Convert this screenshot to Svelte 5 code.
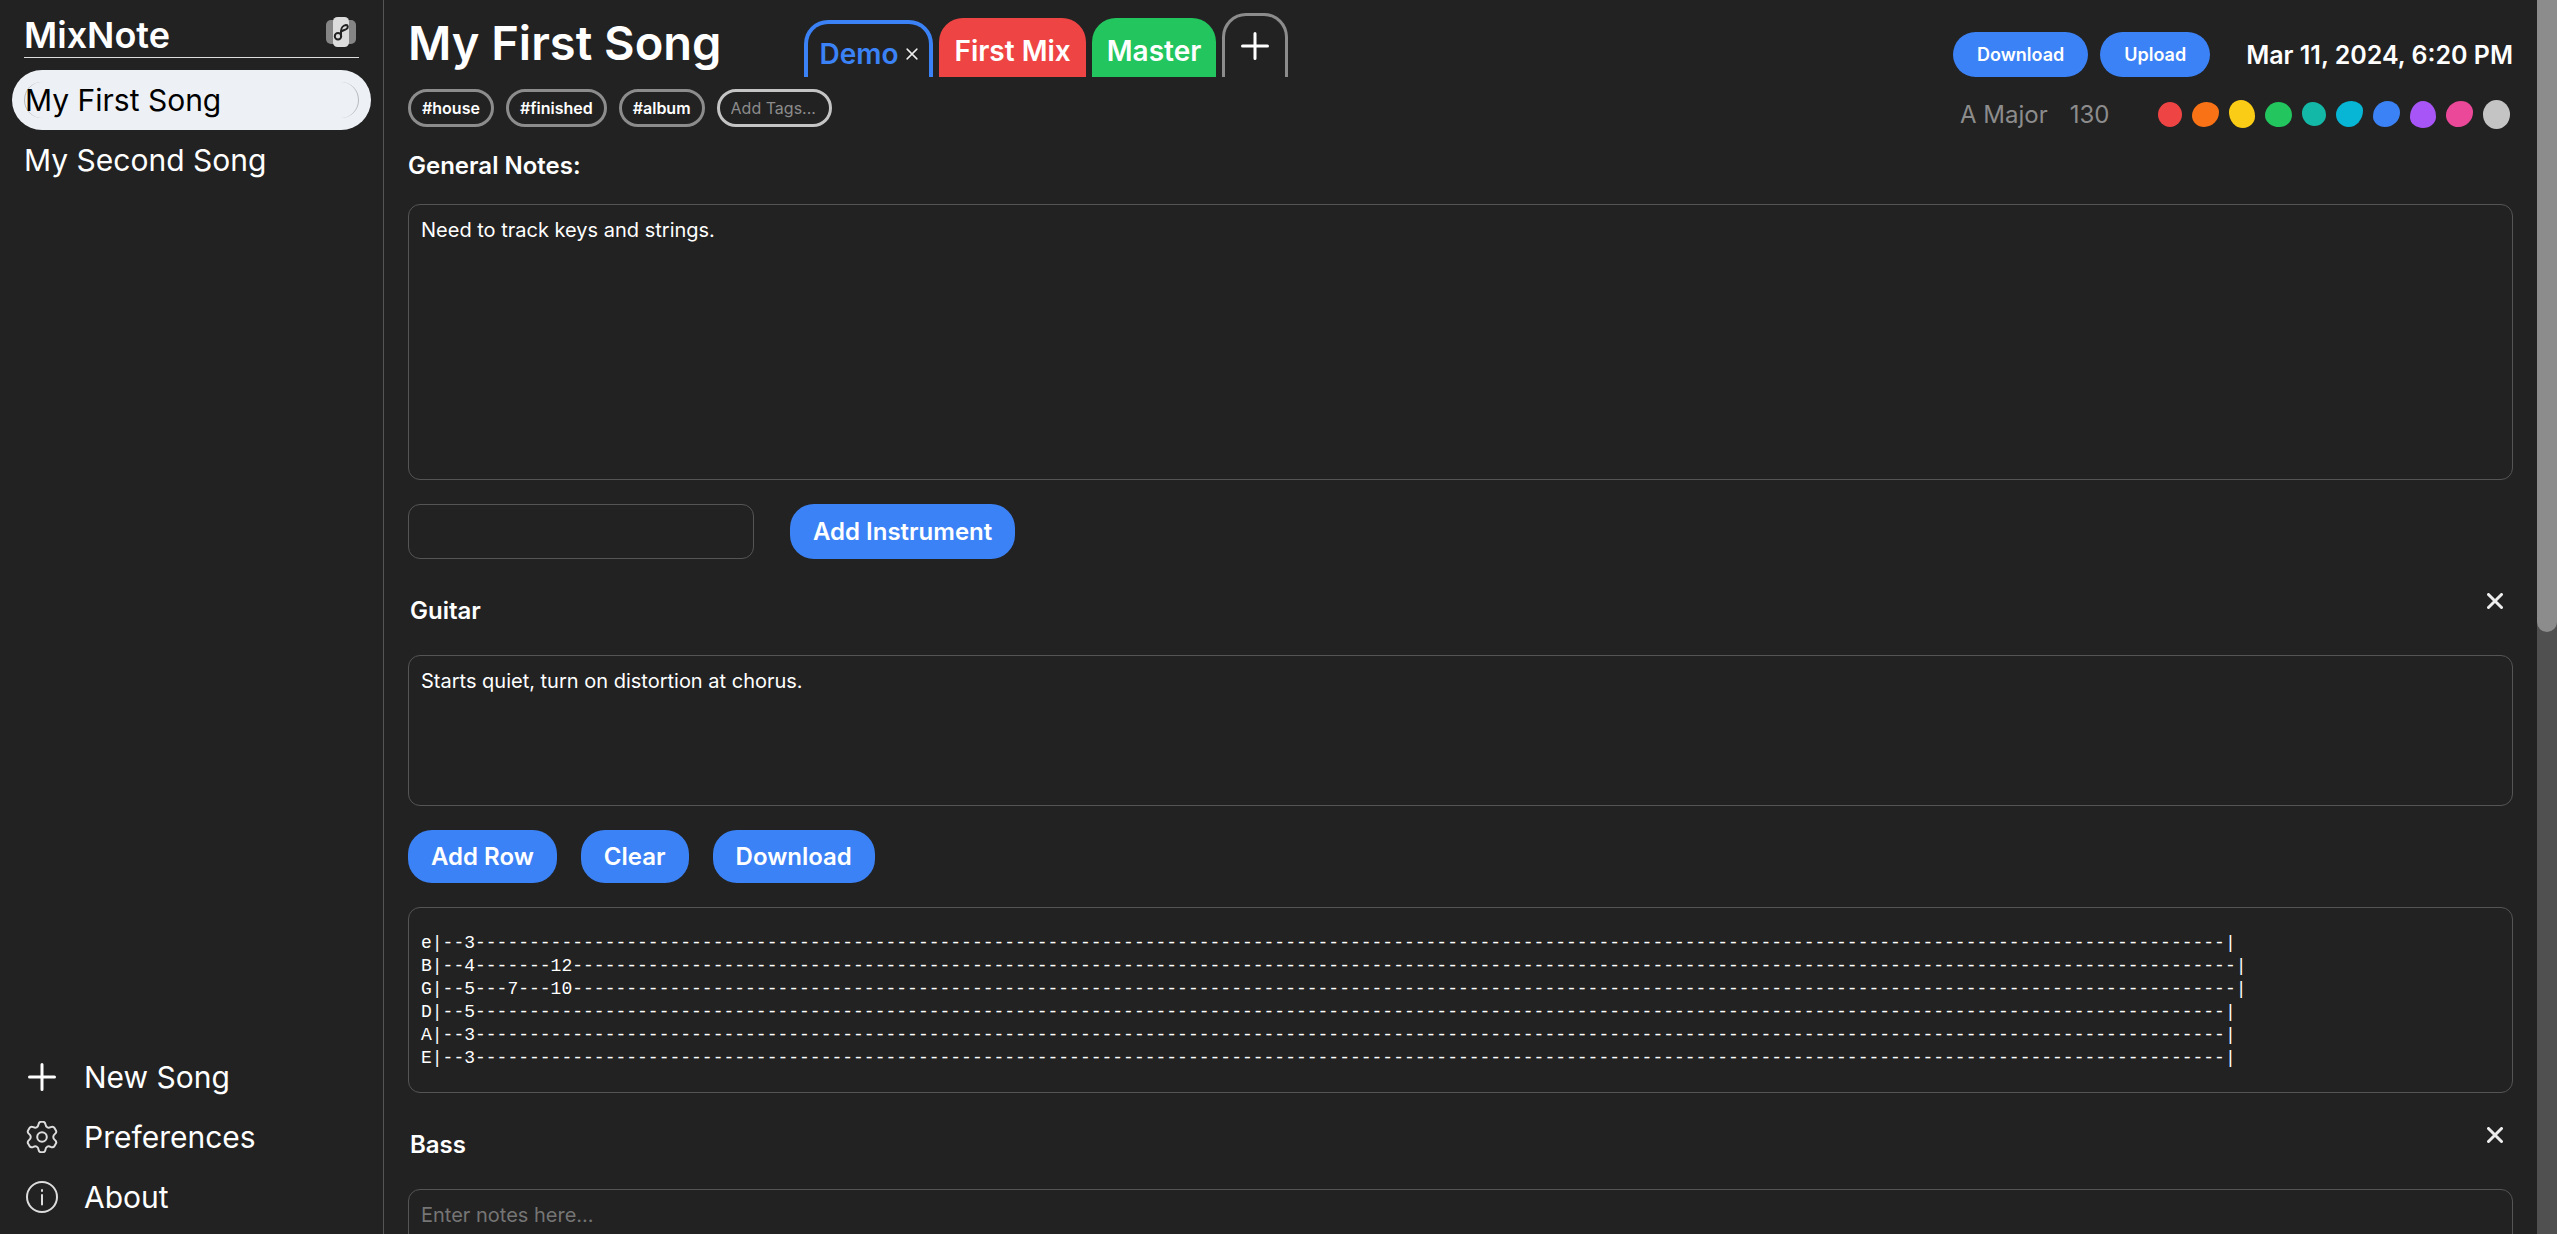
<script>
  const songs = [
    { name: 'My First Song', active: true },
    { name: 'My Second Song', active: false }
  ];
  const tags = ['#house', '#finished', '#album'];
  const colors = ['red', 'orange', 'yellow', 'green', 'teal', 'cyan', 'blue', 'purple', 'pink', 'grey'];
  const tab = [
    'e|--3' + '-'.repeat(162) + '|',
    'B|--4-------12' + '-'.repeat(154) + '|',
    'G|--5---7---10' + '-'.repeat(154) + '|',
    'D|--5' + '-'.repeat(162) + '|',
    'A|--3' + '-'.repeat(162) + '|',
    'E|--3' + '-'.repeat(162) + '|'
  ].join('\n');
</script>

{#snippet cross()}
  <svg class="cross" viewBox="0 0 16 16" aria-hidden="true"><path d="M1.5 1.5 14.5 14.5M14.5 1.5 1.5 14.5" /></svg>
{/snippet}

<div class="app">
  <aside class="sidebar">
    <header class="brand">
      <h1>MixNote</h1>
      <svg class="logo" viewBox="0 0 30 30" aria-hidden="true">
        <rect x="0" y="3" width="30" height="24" rx="5" fill="#858585" stroke="none" />
        <rect x="7" y="0" width="16" height="30" rx="4.5" fill="#dcdcdc" stroke="none" />
        <circle cx="12" cy="19.3" r="3.2" />
        <path d="M15 19V14C15 10.500 17.500 8.300 20 8C22.300 7.900 22.300 10.800 20.500 12C19 13 17 13.200 15.300 14.500" />
      </svg>
    </header>
    <nav class="songs" aria-label="Songs">
      {#each songs as song}
        <button class="song" class:active={song.active}><span>{song.name}</span></button>
      {/each}
    </nav>
    <nav class="menu" aria-label="Application">
      <button>
        <svg class="plus" viewBox="0 0 32 32" aria-hidden="true"><path d="M16 3.500V28.500M3.500 16H28.500" /></svg>
        New Song
      </button>
      <button>
        <svg viewBox="0 0 32 32" aria-hidden="true">
          <circle cx="16" cy="16" r="4.800" />
          <path d="M12.600 3.200Q13 .8 15 .8H17Q19 .8 19.400 3.200C19.900 6.500 22.400 7.300 24.600 6.100Q27.300 4.900 28.500 7L29.900 9.400Q31 11.500 28.900 13C26.700 14.600 26.700 17.400 28.900 19Q31 20.500 29.900 22.600L28.500 25Q27.300 27.100 24.600 25.900C22.400 24.700 19.900 25.500 19.400 28.800Q19 31.200 17 31.200H15Q13 31.200 12.600 28.800C12.100 25.500 9.600 24.700 7.400 25.900Q4.700 27.100 3.500 25L2.100 22.600Q1 20.500 3.100 19C5.300 17.400 5.300 14.600 3.100 13Q1 11.500 2.100 9.400L3.500 7Q4.700 4.900 7.400 6.100C9.600 7.300 12.100 6.500 12.600 3.200Z" />
        </svg>
        Preferences
      </button>
      <button>
        <svg viewBox="0 0 32 32" aria-hidden="true"><circle cx="16" cy="16" r="15" /><path d="M16 14V23.500M16 9V10" /></svg>
        About
      </button>
    </nav>
  </aside>

  <main>
    <header class="top">
      <div class="heading">
        <div class="title-row">
          <h2>My First Song</h2>
          <div class="tabs" role="tablist">
            <div class="tab demo"><button role="tab" aria-selected="true">Demo</button><button class="close" aria-label="Close Demo">{@render cross()}</button></div>
            <button class="tab first" role="tab" aria-selected="false">First Mix</button>
            <button class="tab master" role="tab" aria-selected="false">Master</button>
            <button class="tab add" aria-label="Add version"><svg class="plus" viewBox="0 0 28 28" aria-hidden="true"><path d="M14 1.500V26.500M1.500 14H26.500" /></svg></button>
          </div>
        </div>
        <div class="tags">
          {#each tags as tag}<button class="tag">{tag}</button>{/each}
          <input class="tag entry" placeholder="Add Tags..." aria-label="Add tags" />
        </div>
      </div>
      <div class="meta">
        <div class="actions">
          <button class="pill small">Download</button>
          <button class="pill small">Upload</button>
          <time datetime="2024-03-11T18:20">Mar 11, 2024, 6:20 PM</time>
        </div>
        <div class="details">
          <span>A Major</span>
          <span>130</span>
          <div class="colors">
            {#each colors as color}<button class="dot {color}" aria-label={color}></button>{/each}
          </div>
        </div>
      </div>
    </header>

    <label class="section" for="general">General Notes:</label>
    <textarea id="general" class="general" value="Need to track keys and strings."></textarea>

    <form class="instrument-form">
      <input class="field" aria-label="Instrument name" />
      <button type="button" class="pill">Add Instrument</button>
    </form>

    <section>
      <div class="instrument">
        <label for="guitar">Guitar</label>
        <button aria-label="Remove Guitar">{@render cross()}</button>
      </div>
      <textarea id="guitar" value="Starts quiet, turn on distortion at chorus."></textarea>
      <div class="row-actions">
        <button class="pill">Add Row</button>
        <button class="pill">Clear</button>
        <button class="pill">Download</button>
      </div>
      <pre>{tab}</pre>
    </section>

    <section>
      <div class="instrument">
        <label for="bass">Bass</label>
        <button aria-label="Remove Bass">{@render cross()}</button>
      </div>
      <textarea id="bass" placeholder="Enter notes here..."></textarea>
    </section>
  </main>
  <div class="scrollbar" aria-hidden="true"><div class="thumb"></div></div>
</div>

<style>
  :global(body) { background: #222; }
  * { box-sizing: border-box; }
  .app {
    display: flex;
    height: 100vh;
    overflow: hidden;
    background: #222;
    color: #fff;
    font-family: Inter, "Liberation Sans", sans-serif;
  }
  button, input, textarea { font: inherit; color: inherit; margin: 0; padding: 0; border: 0; background: none; }
  button { cursor: pointer; }
  h1, h2 { margin: 0; }
  svg { display: block; fill: none; stroke-linecap: round; stroke-linejoin: round; }

  .sidebar { display: flex; flex-direction: column; width: 384px; flex: none; padding: 12px 12px 7px; border-right: 1px solid #555; }
  .brand { display: flex; justify-content: space-between; align-items: center; height: 46px; margin: 0 12px 12px; border-bottom: 1px solid #ddd; }
  h1 { font-size: 36px; line-height: 46px; font-weight: 600; }
  .logo { width: 30px; height: 30px; margin: 0 3px 5px 0; stroke: #222; stroke-width: 2; }
  .songs { display: flex; flex-direction: column; flex: 1; }
  .song { padding: 12px; height: 60px; border-radius: 30px; text-align: left; font-size: 30px; line-height: 36px; }
  .song span { display: block; border-radius: 18px; }
  .song.active { background: #edf1f5; color: #000; }
  .song.active span { border: 0 solid #b4b8bb; border-width: 0 1px; }
  .menu { display: flex; flex-direction: column; }
  .menu button { display: flex; align-items: center; gap: 26px; height: 60px; padding: 0 14px; font-size: 30px; }
  .menu svg { width: 32px; height: 32px; stroke: #ddd; stroke-width: 2; }
  .menu .plus { stroke: #fff; stroke-width: 3; }

  main { flex: 1; min-width: 0; padding: 12px 24px 0; overflow: hidden; }
  .top { display: flex; justify-content: space-between; }
  .title-row { display: flex; height: 65px; gap: 83px; align-items: flex-end; }
  h2 { font-size: 47px; line-height: 62px; font-weight: 600; align-self: flex-start; }
  .tabs { display: flex; align-items: flex-end; gap: 6px; font-size: 28px; line-height: 36px; font-weight: 600; }
  .tab { border-radius: 24px 24px 0 0; }
  .demo { display: flex; align-items: center; height: 57px; padding: 6px 11px 0; gap: 8px; border: 4px solid #3b82f6; border-bottom: 0; color: #3b82f6; }
  .close { color: #fff; }
  .close .cross { width: 12px; height: 12px; }
  .first, .master { height: 59px; padding: 6px 15px 0; }
  .first { background: #ef4444; }
  .master { background: #22c55e; }
  .add { display: grid; place-items: center; width: 66px; height: 64px; padding-bottom: 2px; border: 3px solid #8c8c8c; border-bottom: 0; }
  .add svg { width: 28px; height: 28px; stroke: #fff; stroke-width: 3; }
  .tags { display: flex; gap: 12px; margin-top: 12px; }
  .tag { height: 38px; padding: 0 11px; border: 3px solid #8c8c8c; border-radius: 19px; font-size: 16px; font-weight: 600; }
  .entry { width: 115px; border-color: #c4c4c4; font-weight: 400; }
  .entry::placeholder { color: #8c8c8c; opacity: 1; }

  .meta { display: flex; flex-direction: column; }
  .actions { display: flex; align-items: center; gap: 12px; margin-top: 20px; }
  .pill { height: 53px; padding: 0 23px; border-radius: 24px; background: #3b82f6; font-size: 24px; font-weight: 600; white-space: nowrap; }
  .small { height: 45px; padding: 0 24px; font-size: 18px; }
  time { margin-left: 24px; font-size: 25px; font-weight: 600; }
  .details { display: flex; align-items: center; gap: 22px; height: 36px; margin: 19px 3px 0 7px; color: #8c8c8c; font-size: 24px; }
  .colors { display: flex; align-items: center; gap: 10px; margin-left: auto; }
  .dot { border-radius: 50%; }
  .red { width: 24px; height: 25px; background: #ef4444; }
  .orange { width: 27px; height: 25px; background: #f97316; border-radius: 55% 45% 55% 45% / 55% 40% 60% 45%; }
  .yellow { width: 26px; height: 28px; background: #facc15; border-radius: 46% 54% 46% 54% / 44% 58% 42% 56%; }
  .green { width: 27px; height: 25px; background: #22c55e; border-radius: 50% 50% 46% 54% / 54% 52% 48% 46%; }
  .teal { width: 24px; height: 24px; background: #14b8a6; border-radius: 44% 56% 48% 52% / 46% 54% 46% 54%; }
  .cyan { width: 27px; height: 26px; background: #06b6d4; border-radius: 58% 42% 54% 46% / 52% 36% 64% 48%; }
  .blue { width: 27px; height: 26px; background: #3b82f6; border-radius: 54% 46% 56% 44% / 60% 44% 56% 40%; }
  .purple { width: 26px; height: 27px; background: #a855f7; border-radius: 50% 50% 50% 50% / 60% 58% 42% 40%; }
  .pink { width: 27px; height: 26px; background: #ec4899; border-radius: 56% 44% 54% 46% / 56% 42% 58% 44%; }
  .grey { width: 27px; height: 29px; background: #c4c4c4; }

  .section { display: block; margin: 24px 0; font-size: 24px; line-height: 29px; font-weight: 600; }
  .top + .section { margin-top: 19px; }
  textarea, .field, pre { border: 1px solid #555; border-radius: 12px; }
  textarea { display: block; width: 100%; height: 151px; padding: 12px; font-size: 20px; line-height: 27px; resize: none; }
  textarea::placeholder { color: #757575; opacity: 1; }
  .general { height: 276px; }
  .instrument-form { display: flex; gap: 36px; margin: 24px 0; }
  .instrument-form .pill { height: 55px; }
  .field { width: 346px; padding: 0 12px; font-size: 20px; }
  .instrument { display: flex; justify-content: space-between; align-items: flex-start; height: 72px; padding: 0 10px 0 2px; }
  .instrument label { margin-top: 13px; font-size: 24px; line-height: 29px; font-weight: 600; }
  .instrument button { margin-top: 10px; }
  .cross { width: 16px; height: 16px; stroke: #eee; stroke-width: 3; }
  .close .cross { stroke-width: 2; }
  .row-actions { display: flex; gap: 24px; margin: 24px 0; }
  pre { margin: 0 0 24px; padding: 24px 12px 22px; font: 18px/23px "Liberation Mono", monospace; overflow: hidden; }

  .scrollbar { flex: none; width: 20px; background: #505050; }
  .thumb { height: 51.2%; background: #8c8c8c; border-radius: 0 0 10px 10px; }
</style>
